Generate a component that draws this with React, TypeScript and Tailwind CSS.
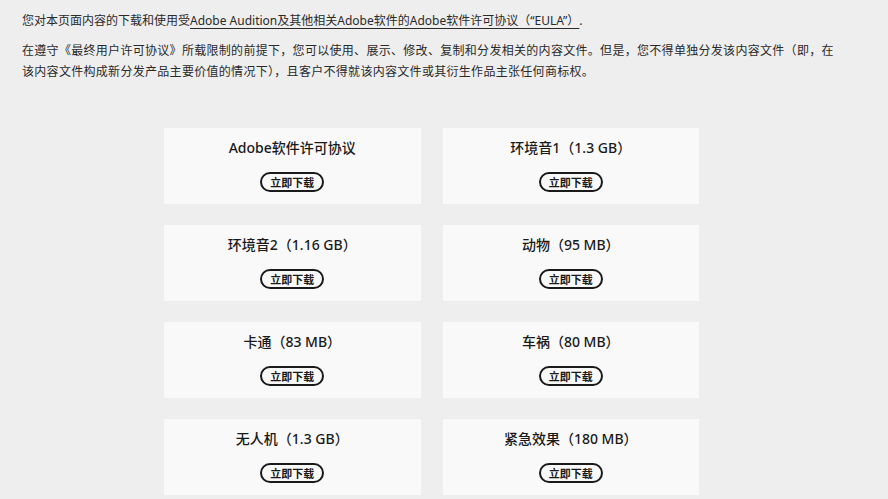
import React from "react";

const items = [
  "Adobe软件许可协议",
  "环境音1（1.3 GB）",
  "环境音2（1.16 GB）",
  "动物（95 MB）",
  "卡通（83 MB）",
  "车祸（80 MB）",
  "无人机（1.3 GB）",
  "紧急效果（180 MB）",
];

export default function App() {
  return (
    <div
      className="min-h-screen bg-[#eeeeee] text-[#1e1e1e] pb-10"
      style={{ fontFamily: '"Noto Sans", "Noto Sans CJK SC", sans-serif' }}
    >
      <div className="ml-[22px] w-[816px] pt-[10px] text-[12px] leading-[21px] text-[#2a2a2a]">
        <p className="mb-[9px]">
          您对本页面内容的下载和使用受
          <span className="underline underline-offset-[3px]">
            Adobe Audition及其他相关Adobe软件的Adobe软件许可协议（“EULA”）
          </span>
          .
        </p>
        <p className="tracking-[0.3px]">
          在遵守《最终用户许可协议》所载限制的前提下，您可以使用、展示、修改、复制和分发相关的内容文件。但是，您不得单独分发该内容文件（即，在该内容文件构成新分发产品主要价值的情况下），且客户不得就该内容文件或其衍生作品主张任何商标权。
        </p>
      </div>
      <div className="mt-[46px] ml-[164px] w-[535px] grid grid-cols-2 gap-x-[22px] gap-y-[21px]">
        {items.map((t) => (
          <div
            key={t}
            className="h-[76px] bg-[#f9f9f9] flex flex-col items-center pt-[9px]"
          >
            <div className="text-[14px] leading-[22px] font-medium text-[#1a1a1a]">{t}</div>
            <button className="mt-[13px] h-[20px] w-[64px] rounded-full border-2 border-[#1a1a1a] text-[11px] leading-none font-semibold text-[#1a1a1a] flex items-center justify-center">
              立即下载
            </button>
          </div>
        ))}
      </div>
    </div>
  );
}
